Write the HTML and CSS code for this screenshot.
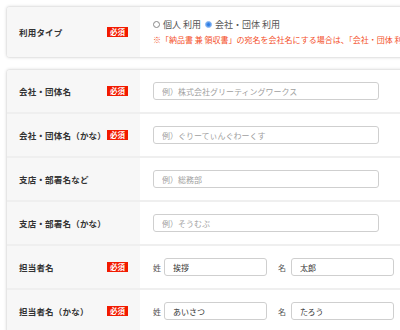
FILE: index.html
```html
<!DOCTYPE html>
<html lang="ja">
<head>
<meta charset="utf-8">
<link rel="stylesheet" href="styles.css">
</head>
<body>
<div class="page">
  <section class="card">
    <div class="row row-type">
      <div class="label"><span class="label-text">利用タイプ</span><span class="req">必須</span></div>
      <div class="field field-type">
        <div class="radios">
          <span class="radio"><span class="dot"></span>個人 利用</span>
          <span class="radio on"><span class="dot"></span>会社・団体 利用</span>
        </div>
        <p class="note">※「納品書 兼 領収書」の宛名を会社名にする場合は、「会社・団体 利用」</p>
      </div>
    </div>
  </section>

  <section class="card">
    <div class="row">
      <div class="label"><span class="label-text">会社・団体名</span><span class="req">必須</span></div>
      <div class="field"><input class="text wide" type="text" placeholder="例）株式会社グリーティングワークス"></div>
    </div>
    <div class="row">
      <div class="label"><span class="label-text">会社・団体名（かな）</span><span class="req">必須</span></div>
      <div class="field"><input class="text wide" type="text" placeholder="例）ぐりーてぃんぐわーくす"></div>
    </div>
    <div class="row">
      <div class="label"><span class="label-text">支店・部署名など</span></div>
      <div class="field"><input class="text wide" type="text" placeholder="例）総務部"></div>
    </div>
    <div class="row">
      <div class="label"><span class="label-text">支店・部署名（かな）</span></div>
      <div class="field"><input class="text wide" type="text" placeholder="例）そうむぶ"></div>
    </div>
    <div class="row">
      <div class="label"><span class="label-text">担当者名</span><span class="req">必須</span></div>
      <div class="field names">
        <span class="sub">姓</span><input class="text half" type="text" value="挨拶">
        <span class="sub sub2">名</span><input class="text half" type="text" value="太郎">
      </div>
    </div>
    <div class="row">
      <div class="label"><span class="label-text">担当者名（かな）</span><span class="req">必須</span></div>
      <div class="field names">
        <span class="sub">姓</span><input class="text half" type="text" value="あいさつ">
        <span class="sub sub2">名</span><input class="text half" type="text" value="たろう">
      </div>
    </div>
  </section>
</div>
</body>
</html>
```

FILE: styles.css
```css
html, body {
  margin: 0;
  padding: 0;
  background: #ffffff;
  overflow: hidden;
  width: 400px;
  height: 330px;
}
body {
  font-family: "Noto Sans CJK JP", "Noto Sans", sans-serif;
  color: #333;
}
.page {
  padding: 6px 0 0 6px;
  display: flex;
  flex-direction: column;
  gap: 11px;
}
.card {
  width: 420px;
  background: #fff;
  border: 1px solid #e6e6e6;
  border-radius: 4px;
  box-shadow: 0 0 3px rgba(0, 0, 0, 0.12);
  overflow: hidden;
}
.row {
  display: grid;
  grid-template-columns: 133px 1fr;
  height: 42px;
  border-bottom: 2px solid #efefef;
}
.row-type {
  height: 50px;
  border-bottom: none;
}
.label {
  background: #f7f7f7;
  display: flex;
  align-items: center;
  justify-content: space-between;
  padding: 0 12px 0 12px;
}
.label-text {
  font-size: 8.5px;
  font-weight: bold;
  color: #333;
  white-space: nowrap;
  letter-spacing: 0.2px;
}
.req {
  background: #f21a00;
  color: #fff;
  font-size: 7.5px;
  font-weight: bold;
  width: 21px;
  height: 10px;
  line-height: 10px;
  text-align: center;
  flex: none;
}
.field {
  display: flex;
  align-items: center;
  padding-left: 13px;
}
.field-type {
  flex-direction: column;
  align-items: flex-start;
  justify-content: center;
  gap: 3px;
  overflow: hidden;
}
.radios {
  display: flex;
  gap: 4px;
  font-size: 9px;
  color: #555;
  line-height: 13px;
  white-space: nowrap;
}
.radio {
  display: flex;
  align-items: center;
  gap: 2px;
}
.dot {
  width: 5px;
  height: 5px;
  border: 1px solid #888;
  border-radius: 50%;
  background: #fff;
  margin-right: 1px;
}
.radio.on .dot {
  border-color: #9cc3f5;
  background: #2f7de1;
  box-shadow: inset 0 0 0 1px #5b9cf0;
}
.note {
  margin: 0;
  font-size: 8px;
  line-height: 12px;
  color: #f4502a;
  white-space: nowrap;
}
.text {
  box-sizing: border-box;
  height: 18px;
  border: 1px solid #cfcfcf;
  border-radius: 3px;
  padding: 0 8px;
  font-family: "Noto Sans CJK JP", "Noto Sans", sans-serif;
  font-size: 8px;
  color: #333;
  background: #fff;
  outline: none;
}
.text::placeholder {
  color: #a0a0a0;
}
.wide {
  width: 226px;
}
.half {
  width: 103px;
}
.sub {
  font-size: 8px;
  color: #555;
  width: 11px;
}
.sub2 {
  margin-left: 11px;
  width: 13px;
}
```
